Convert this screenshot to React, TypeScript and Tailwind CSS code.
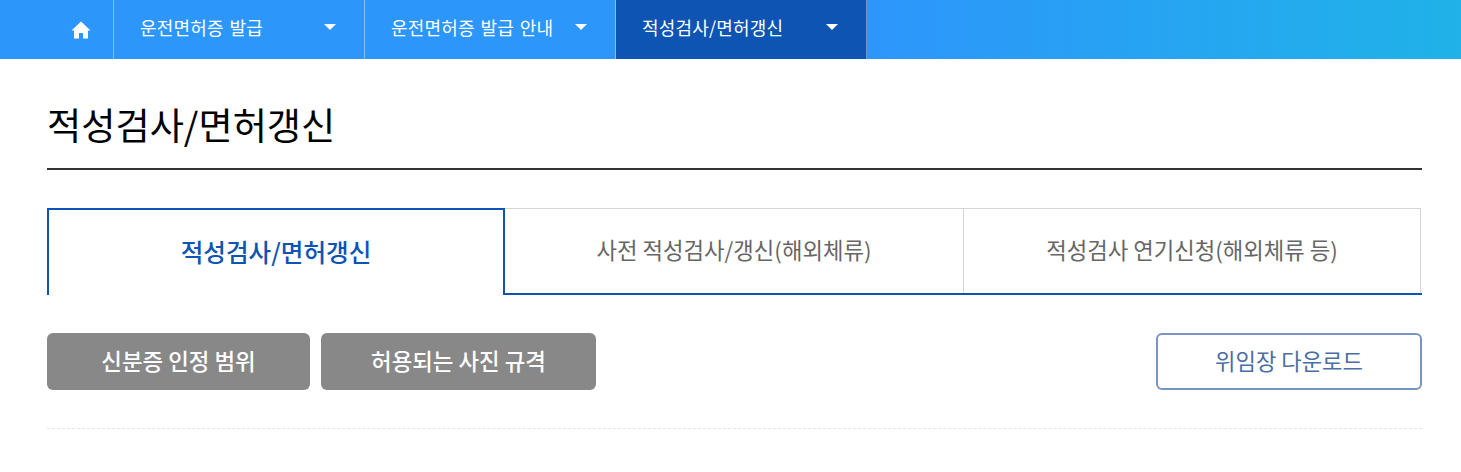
const font = "font-['Noto_Sans_CJK_KR','Noto_Sans',sans-serif]";

const Caret = () => (
  <svg width="12" height="6" viewBox="0 0 12 6" className="shrink-0">
    <path d="M0 0h12L6 6z" fill="#fff" />
  </svg>
);

const HomeIcon = () => (
  <svg width="20" height="18" viewBox="0 0 20 18">
    <path d="M10 0.5 0.5 9.5 3 9.5 3 17.5 8 17.5 8 12 12 12 12 17.5 17 17.5 17 9.5 19.5 9.5 Z" fill="#fff" />
  </svg>
);

const NavItem = ({ label, active }: { label: string; active?: boolean }) => (
  <a
    className={`flex h-full w-[251px] items-center justify-between border-r border-white/40 pl-[26px] pr-[28px] text-[18px] tracking-[0.2px] [word-spacing:1.5px] text-white ${
      active ? "bg-[#0d54b3]" : ""
    }`}
  >
    <span className="-mt-[4px]">{label}</span>
    <span className="-mt-[5px]">
      <Caret />
    </span>
  </a>
);

const Tab = ({ label, active, last }: { label: string; active?: boolean; last?: boolean }) => {
  if (active) {
    return (
      <div className="-mb-[2px] flex h-[87px] w-[458px] items-center justify-center border-2 border-b-0 border-[#0d54b3] bg-white pb-[2px] text-[24.6px] font-medium text-[#0d54b3]">
        {label}
      </div>
    );
  }
  return (
    <div
      className={`flex h-[85px] items-center justify-center border-t border-r border-[#d5d5d5] pb-[2px] text-[22.3px] text-[#666] ${
        last ? "w-[457px]" : "w-[459px]"
      }`}
    >
      {label}
    </div>
  );
};

export default function App() {
  return (
    <div className={`h-[472px] overflow-hidden bg-white ${font}`}>
      <nav className="flex h-[59px] bg-gradient-to-r from-[#2d96fb] from-60% to-[#20b2e8]">
        <a className="flex h-full w-[114px] items-center justify-end border-r border-white/40 pr-[22px]">
          <HomeIcon />
        </a>
        <NavItem label="운전면허증 발급" />
        <NavItem label="운전면허증 발급 안내" />
        <NavItem label="적성검사/면허갱신" active />
      </nav>
      <main className="pl-[47px] pr-[39px]">
        <h1 className="flex h-[111px] items-center border-b-2 border-[#333] pt-[22px] text-[37.2px] font-normal text-black">
          적성검사/면허갱신
        </h1>
        <div className="mt-[38px] flex border-b-2 border-[#0d54b3]">
          <Tab label="적성검사/면허갱신" active />
          <Tab label="사전 적성검사/갱신(해외체류)" />
          <Tab label="적성검사 연기신청(해외체류 등)" last />
        </div>
        <div className="mt-[38px] flex items-start gap-[11px] border-b border-dashed border-[#e5e5e5] pb-[38px]">
          <button className="h-[57px] w-[263px] rounded-md bg-[#888] pb-[2px] text-[22.4px] font-medium text-white">
            신분증 인정 범위
          </button>
          <button className="h-[57px] w-[275px] rounded-md bg-[#888] pb-[2px] text-[22.4px] font-medium text-white">
            허용되는 사진 규격
          </button>
          <button className="ml-auto h-[57px] w-[266px] rounded-md border-2 border-[#7a94c0] bg-white pb-[2px] text-[22.2px] text-[#4a6ea5]">
            위임장 다운로드
          </button>
        </div>
      </main>
    </div>
  );
}
